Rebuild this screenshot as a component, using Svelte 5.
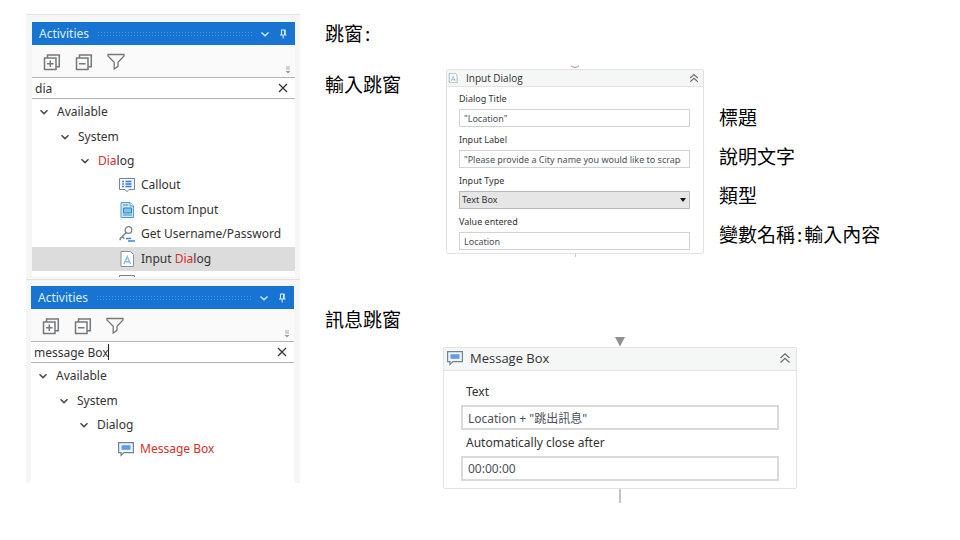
<script>
  const panels = [
    {
      id: 'search-dialog',
      query: 'dia',
      caret: false,
      more: true,
      rows: [
        { level: 0, parts: ['Available'] },
        { level: 1, parts: ['System'] },
        { level: 2, parts: ['', 'Dia', 'log'] },
        { level: 3, icon: 'callout', parts: ['Callout'] },
        { level: 3, icon: 'form', parts: ['Custom Input'] },
        { level: 3, icon: 'key', parts: ['Get Username/Password'] },
        { level: 3, icon: 'input', parts: ['Input ', 'Dia', 'log'], selected: true }
      ]
    },
    {
      id: 'search-message',
      query: 'message Box',
      caret: true,
      more: false,
      rows: [
        { level: 0, parts: ['Available'] },
        { level: 1, parts: ['System'] },
        { level: 2, parts: ['Dialog'] },
        { level: 3, icon: 'message', parts: ['', 'Message Box', ''] }
      ]
    }
  ];
</script>

{#snippet icon(name)}
  <svg class="icon" viewBox="0 0 16 16" width="16" height="16" aria-hidden="true">
    {#if name === 'callout'}
      <path d="M.5 1.5h15v11H10L8 14.700 6 12.500H.5z" fill="#f4f8fc" stroke="#76828f" />
      <path d="M3 4.500h2M3 7h2M3 9.500h2" stroke="#4a88dc" stroke-width="1.400" />
      <path d="M6.500 4.500h6M6.500 7h6M6.500 9.500h6" stroke="#2f74d6" stroke-width="1.400" />
    {:else if name === 'form'}
      <path d="M2 .5h9L14.500 4v11.500H2z" fill="#c9e6f6" stroke="#5b9cc4" />
      <path d="M11 .5V4h3.500" fill="#fff" stroke="#5b9cc4" />
      <path d="M4 3h5M4 13h9" stroke="#3f8fc2" />
      <path d="M4.500 6h8v5h-8z" fill="#7fc4ea" stroke="#2d85bd" />
    {:else if name === 'key'}
      <circle cx="9.500" cy="4" r="3.300" fill="none" stroke="#7b8087" stroke-width="1.300" />
      <path d="M7.300 6.500 1.200 12.500v1.800M3.200 10.600l2 2.200" fill="none" stroke="#7b8087" stroke-width="1.500" />
      <path d="M7 12.500h5M9 15h7" stroke="#3f82e0" stroke-width="1.500" />
    {:else if name === 'input'}
      <path d="M2 .5h9.500L14.500 3.500v12H2z" fill="#fbfdfe" stroke="#8b9197" />
      <path d="M5 13 8.200 5.500 11.500 13M6 10.700h4.500" fill="none" stroke="#84bfe2" stroke-width="1.400" />
    {:else if name === 'message'}
      <path d="M.6 1.600h14.800v10H6L3 14.400v-2.800H.6z" fill="#eef4fb" stroke="#74818f" stroke-width="1.200" />
      <path d="M3.500 4.200h9v4.600h-9z" fill="#5e9cea" />
    {/if}
  </svg>
{/snippet}

{#snippet collapse()}
  <svg viewBox="0 0 12 12" aria-hidden="true">
    <path d="M1.500 6 6 1.800 10.500 6M1.500 10.500 6 6.300l4.500 4.200" fill="none" stroke="#6c6f73" stroke-width="1.300" />
  </svg>
{/snippet}

<main>
  <aside>
    {#each panels as panel (panel.id)}
      <section class="panel" class:more={panel.more}>
        <header>
          <h2>Activities</h2>
          <span class="grip"></span>
          <button aria-label="Panel options">
            <svg width="10" height="10" viewBox="0 0 10 10"><path d="M1.500 3.500 5 6.800l3.500-3.300" fill="none" stroke="#d8eafc" stroke-width="1.400" /></svg>
          </button>
          <button aria-label="Pin panel">
            <svg width="10" height="10" viewBox="0 0 10 10"><path d="M3 1h4.500M3.500 1v5M7 1v5M2 6h6.500M5.200 6v3.500" fill="none" stroke="#d8eafc" stroke-width="1.100" /><path d="M6 1h1.500v5H6z" fill="#d8eafc" /></svg>
          </button>
        </header>
        <div class="tools">
          <button aria-label="Expand all">
            <svg width="18" height="18" viewBox="0 0 18 18"><path d="M1.500 5h11.500v11.500H1.500zM4.500 4.500V2H16.300v11.800H13.500M4 10.700h6.500M7.300 7.500V14" fill="none" stroke="#75777a" stroke-width="1.500" /></svg>
          </button>
          <button aria-label="Collapse all">
            <svg width="18" height="18" viewBox="0 0 18 18"><path d="M1.500 5h11.500v11.500H1.500zM4.500 4.500V2H16.300v11.800H13.500M4 10.700h6.500" fill="none" stroke="#75777a" stroke-width="1.500" /></svg>
          </button>
          <button aria-label="Filter">
            <svg width="18" height="18" viewBox="0 0 18 18"><path d="M1 1.500h16v1.500L11 9.300v4L7.200 16V9.300L1 3z" fill="none" stroke="#75777a" stroke-width="1.300" /></svg>
          </button>
          <svg class="overflow" width="6" height="8" viewBox="0 0 6 8" aria-hidden="true"><path d="M1 1h4M1 3h4" stroke="#aaa" /><path d="M.5 5h5L3 7.500z" fill="#999" /></svg>
        </div>
        <div class="search">
          <input id={panel.id} aria-label="Search activities" value={panel.query} />
          {#if panel.caret}<span class="caret"></span>{/if}
          <button aria-label="Clear search">
            <svg width="10" height="10" viewBox="0 0 10 10"><path d="m1 1 8 8M9 1 1 9" stroke="#333" stroke-width="1.300" /></svg>
          </button>
        </div>
        <div class="tree" style:--rows={panel.rows.length}>
          {#each panel.rows as row}
            <button class="row level{row.level}" class:selected={row.selected}>
              {#if row.icon}
                {@render icon(row.icon)}
              {:else}
                <svg class="chevron" width="10" height="10" viewBox="0 0 10 10" aria-hidden="true"><path d="M1.500 3.300 5 6.600l3.500-3.300" fill="none" stroke="#4a4a4a" stroke-width="1.500" /></svg>
              {/if}
              <span class="name">{row.parts[0]}<em>{row.parts[1] ?? ''}</em>{row.parts[2] ?? ''}</span>
            </button>
          {/each}
        </div>
        {#if panel.more}
          <div class="cut">
            {@render icon('callout')}
          </div>
        {/if}
      </section>
    {/each}
  </aside>

  <div class="guide">
    <h1>跳窗<span class="colon">:</span></h1>

    <section class="topic first">
      <h3>輸入跳窗</h3>
      <div class="flow">
        <svg class="ring" width="8" height="4" viewBox="0 0 8 4" aria-hidden="true"><path d="M0 .5C1.500 3 6.500 3 8 .5" fill="none" stroke="#aaa" stroke-width="1.200" /></svg>
        <form class="card small">
          <header>
            {@render icon('input')}
            <h4>Input Dialog</h4>
            <button type="button" aria-label="Collapse Input Dialog">{@render collapse()}</button>
          </header>
          <div class="fields">
            <div class="field">
              <label for="title">Dialog Title</label>
              <input id="title" value={'"Location"'} />
            </div>
            <div class="field">
              <label for="prompt">Input Label</label>
              <input id="prompt" value={'"Please provide a City name you would like to scrape"'} />
            </div>
            <div class="field">
              <label for="type">Input Type</label>
              <span class="select">
                <select id="type"><option>Text Box</option></select>
                <svg width="6" height="4" viewBox="0 0 6 4" aria-hidden="true"><path d="M0 0h6L3 4z" fill="#111" /></svg>
              </span>
            </div>
            <div class="field">
              <label for="value">Value entered</label>
              <input id="value" value="Location" />
            </div>
          </div>
        </form>
        <span class="stub"></span>
      </div>
      <ul class="notes">
        <li>標題</li>
        <li>說明文字</li>
        <li>類型</li>
        <li>變數名稱<span class="colon">:</span>輸入內容</li>
      </ul>
    </section>

    <section class="topic second">
      <h3>訊息跳窗</h3>
      <div class="flow">
        <svg class="arrow" width="10" height="10" viewBox="0 0 10 10" aria-hidden="true"><path d="M0 0h10L5 9.500z" fill="#8f8f8f" /></svg>
        <form class="card large">
          <header>
            {@render icon('message')}
            <h4>Message Box</h4>
            <button type="button" aria-label="Collapse Message Box">{@render collapse()}</button>
          </header>
          <div class="fields">
            <div class="field">
              <label for="text">Text</label>
              <input id="text" value={'Location + "跳出訊息"'} />
            </div>
            <div class="field">
              <label for="timeout">Automatically close after</label>
              <input id="timeout" value="00:00:00" />
            </div>
          </div>
        </form>
        <span class="stub long"></span>
      </div>
    </section>
  </div>
</main>

<style>
  :global(body) {
    margin: 0;
    background: #fff;
  }
  main, main * {
    box-sizing: border-box;
  }
  main {
    display: flex;
    align-items: flex-start;
    gap: 25px;
    padding: 14px 24px 36px 26px;
    font: 12px/18px "Noto Sans", "Noto Sans CJK TC", sans-serif;
    color: #333;
  }
  h1, h2, h3, h4, ul {
    margin: 0;
    padding: 0;
    font: inherit;
    list-style: none;
  }
  button {
    display: flex;
    align-items: center;
    padding: 0;
    border: 0;
    background: none;
    font: inherit;
    color: inherit;
    text-align: left;
  }
  input, select {
    min-width: 0;
    width: 100%;
    margin: 0;
    border: 0;
    border-radius: 0;
    outline: 0;
    background: #fff;
    font: inherit;
    color: #4a505c;
  }
  svg {
    display: block;
    flex: none;
  }

  aside {
    flex: 0 0 274px;
    background: #f6f6f6;
    border-top: 1px solid #e4e4e4;
  }
  .panel {
    margin: 8px 6px 0 5px;
    background: #fff;
  }
  .panel.more {
    position: relative;
    margin: 7px 5px 0 6px;
  }
  .panel.more::after {
    content: "";
    position: absolute;
    inset: auto -5px -2px -6px;
    height: 2px;
    border-bottom: 1px solid #e0e0e0;
    background: #f6f6f6;
  }
  .panel header {
    display: flex;
    align-items: center;
    gap: 8px;
    height: 23px;
    padding: 0 7px;
    background: #1874d2;
    color: #deedfb;
  }
  .grip {
    flex: 1;
    height: 5px;
    background: radial-gradient(#4b95e0 30%, transparent 40%) 0 0 / 3px 3px;
  }
  .tools {
    display: flex;
    align-items: center;
    gap: 14px;
    height: 32px;
    padding: 2px 4px 0 11px;
    background: #fafafa;
  }
  .overflow {
    align-self: flex-end;
    margin: 0 0 3px auto;
  }
  .search {
    position: relative;
    display: flex;
    align-items: center;
    height: 22px;
    padding: 0 7px 0 3px;
    border-top: 1px solid #b5b5b5;
    border-bottom: 1px solid #b5b5b5;
  }
  .search input {
    height: 20px;
    padding: 0;
    color: #333;
  }
  .caret {
    position: absolute;
    left: 77px;
    width: 1px;
    height: 16px;
    background: #222;
  }
  .tree {
    display: grid;
    grid-auto-rows: 1fr;
    box-sizing: content-box;
    height: calc(var(--rows) * 171px / 7);
    padding-top: 1px;
  }
  .row {
    gap: 8px;
    width: 100%;
  }
  .level0 { padding-left: 7px; }
  .level1 { padding-left: 28px; }
  .level2 { padding-left: 48px; }
  .level3 { padding-left: 87px; gap: 6px; }
  .selected {
    background: #dcdcdc;
  }
  .name {
    white-space: pre;
  }
  em {
    font-style: normal;
    color: #d3302a;
  }
  .cut {
    height: 7px;
    padding: 3px 0 0 87px;
    overflow: hidden;
  }
  .panel:last-child {
    padding-bottom: 21px;
  }

  .guide {
    flex: 1;
    min-width: 0;
    padding-top: 6px;
    color: #000;
  }
  h1, h3, .notes {
    font: 19px/26px "Noto Sans CJK TC", sans-serif;
    white-space: nowrap;
  }
  .colon {
    padding: 0 2px;
  }
  .topic {
    display: grid;
    column-gap: 15px;
    align-items: start;
  }
  .first {
    grid-template-columns: 106px 258px 1fr;
    margin-top: 19px;
  }
  .second {
    grid-template-columns: 103px 354px;
    margin-top: 30px;
  }
  .first h3 {
    padding-top: 6px;
  }
  .second h3 {
    margin-top: 19px;
  }
  .flow {
    display: flex;
    flex-direction: column;
    align-items: center;
  }
  .second .flow {
    padding-top: 50px;
  }
  .card {
    width: 100%;
    border: 1px solid #e2e2e2;
    border-radius: 2px;
    background: #fff;
    color: #333;
  }
  .card header {
    display: flex;
    align-items: center;
    background: #f5f6f6;
    border-bottom: 1px solid #e2e2e2;
    font-family: "Open Sans", sans-serif;
  }
  .card header button {
    margin-left: auto;
  }
  .card label {
    display: block;
  }
  .fields {
    display: flex;
    flex-direction: column;
  }
  .field {
    display: flex;
    flex-direction: column;
  }
  .small {
    font-size: 9px;
    line-height: 14px;
  }
  .small header {
    height: 17px;
    gap: 8px;
    padding: 0 4px 0 1px;
    font-size: 10px;
  }
  .small header :global(svg) {
    width: 10px;
    height: 10px;
  }
  .small .fields {
    gap: 6px;
    padding: 5px 13px 3px 12px;
  }
  .small .field {
    gap: 3px;
  }
  .small input, select {
    height: 18px;
    padding: 0 8px 0 4px;
    border: 1px solid #cfd2d6;
  }
  .select {
    position: relative;
  }
  .select select {
    display: block;
    appearance: none;
    padding: 0 2px;
    border-color: #b8b8b8;
    background: #e6e6e6;
    color: #333;
  }
  .select svg {
    position: absolute;
    right: 4px;
    top: 7px;
  }
  .large header {
    height: 23px;
    gap: 7px;
    padding: 0 5px 2px 3px;
    font-size: 13px;
  }
  .large header button :global(svg) {
    width: 12px;
    height: 12px;
  }
  .large .fields {
    gap: 4px;
    padding: 12px 17px 7px;
  }
  .large .field {
    gap: 4px;
  }
  .large label {
    padding-left: 5px;
  }
  .large input {
    height: 25px;
    padding: 0 5px;
    border: 2px solid #dadada;
  }
  .stub {
    width: 1px;
    height: 3px;
    background: #c4c4c4;
  }
  .stub.long {
    width: 2px;
    height: 14px;
  }
  .notes {
    display: flex;
    flex-direction: column;
    gap: 13px;
    padding-top: 39px;
  }
</style>
